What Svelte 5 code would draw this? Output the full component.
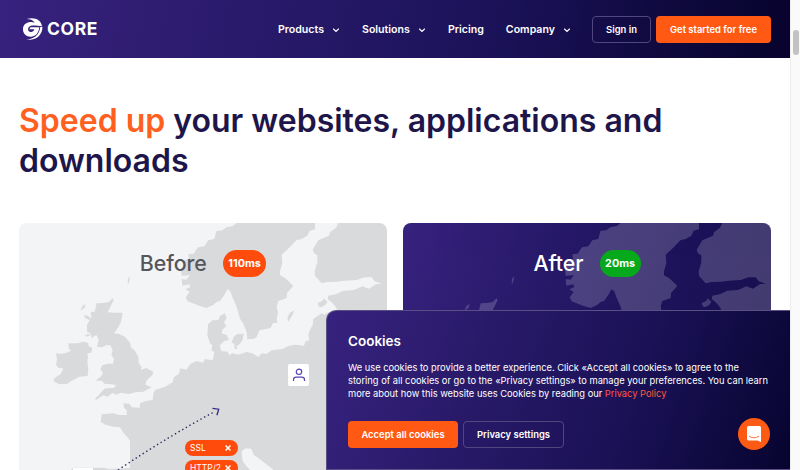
<script>
  const links = [
    { label: 'Products', menu: true },
    { label: 'Solutions', menu: true },
    { label: 'Pricing', menu: false },
    { label: 'Company', menu: true }
  ];
  const cards = [
    { title: 'Before', time: '110ms', kind: 'before' },
    { title: 'After', time: '20ms', kind: 'after' }
  ];
  const tags = ['SSL', 'HTTP/2'];
</script>

{#snippet europe()}
  <svg class="map" viewBox="0 0 1104 741" aria-hidden="true">
    <path d="M653 0L642 9 622 13 610 22 592 24 586 48 568 52 556 70 537 73 524 92 508 94 510 107 488 115 497 125 486 137 488 158 513 157 502 170 488 168 490 188 511 184 514 192 499 199 512 207 500 223 506 235 540 248 563 255 582 246 593 237 604 233 618 212 625 199 634 205 640 222 653 252 663 287 672 300 683 327 685 349 705 347 713 342 721 322 755 315 762 300 775 300 773 285 777 270 773 250 778 234 803 225 804 210 823 189 811 177 798 165 783 157 783 145 790 120 788 95 813 72 832 52 848 48 865 38 872 23 888 19 888 0Z" />
    <path d="M958 0L951 14 933 28 930 38 898 52 881 80 885 91 895 97 895 118 887 145 888 158 908 181 925 177 953 176 977 173 1013 171 1037 163 1058 163 1067 175 1088 182 1070 184 1050 197 1030 190 1005 201 973 203 950 214 928 218 926 228 938 238 948 249 956 262 923 269 918 275 907 271 883 288 881 306 873 320 868 335 871 352 860 354 855 368 828 365 808 369 790 378 758 382 743 393 728 391 718 402 700 391 683 387 658 395 640 391 631 397 626 386 606 384 603 367 615 354 630 351 623 336 608 331 610 320 622 310 615 298 623 285 617 271 603 279 598 291 580 292 567 304 565 337 573 361 580 367 577 382 586 387 583 405 580 412 558 408 552 419 533 414 515 422 502 440 483 436 481 451 465 463 461 478 438 491 408 501 403 511 401 531 380 534 363 541 362 554 338 553 332 543 313 541 315 554 323 562 323 576 300 576 283 571 248 574 245 597 260 605 283 611 303 613 312 628 328 646 333 655 333 735 270 738 255 734 163 734 155 741 693 741 680 727 670 712 668 685 680 676 697 677 704 695 723 709 742 724 764 741H1104V0Z" />
    <path d="M233 241L250 240 268 238 281 226 284 231 274 252 265 268 290 269 311 269 309 283 305 300 296 315 285 331 300 333 318 341 333 359 336 374 346 381 358 401 359 420 368 433 365 441 382 435 403 446 400 457 383 472 379 485 398 493 373 506 350 508 330 513 304 509 293 515 280 510 266 521 253 517 231 531 228 527 245 510 258 496 283 495 292 487 280 484 256 482 249 473 230 473 245 461 252 449 244 439 250 426 268 422 282 422 285 407 277 397 281 382 274 367 260 367 250 373 234 371 239 351 232 335 218 345 214 331 204 326 204 305 213 290 218 281 214 268 227 266Z" />
    <path d="M148 361L178 361 190 356 207 359 209 369 220 375 217 389 205 391 207 405 205 418 208 435 206 459 181 461 157 474 146 482 123 484 107 477 104 467 125 453 133 437 127 434 119 435 111 425 114 409 111 391 125 392 142 390 156 383 150 377Z" />
    <path d="M184 264L190 249 200 243 197 254ZM196 275L207 279 217 287 211 291 197 284ZM198 336L210 332 214 337 202 341ZM327 167L334 160 330 178 326 185Z" />
    <path d="M645 340L655 333 674 332 671 350 663 362 652 371 656 377 647 378 646 364 638 358ZM805 285L812 270 826 262 821 275 808 296ZM896 240L910 234 914 226 925 236 918 247 905 253 899 250Z" />
  </svg>
{/snippet}

<div class="page">
  <main>
    <header>
      <a class="logo" href="#home">
        <svg viewBox="0 0 66 72" width="22" height="24">
          <path fill="#fff" d="M38 17C22 12 4 18 3 35C2 50 14 60 28 59C42 58 50 48 52 31H25L22 37H37C35 44 28 47 23 44C16 41 17 30 25 27C32 24 48 27 60 27C56 8 38 0 14 6C24 6 33 9 38 17Z" />
          <path fill="#fff" d="M61 29C63 52 42 73 12 67C36 67 52 54 55 29Z" />
        </svg>
        <span>CORE</span>
      </a>
      <nav>
        {#each links as link}
          <a href="#{link.label}">{link.label}
            {#if link.menu}
              <svg width="8" height="5" viewBox="0 0 8 5"><path d="M1.500 1L4 3.500 6.500 1" fill="none" stroke="#fff" stroke-width="1.1" stroke-linecap="round" /></svg>
            {/if}
          </a>
        {/each}
      </nav>
      <button class="btn outline signin">Sign in</button>
      <button class="btn orange start">Get started for free</button>
    </header>

    <h1><em>Speed up</em> your websites, applications and downloads</h1>

    <section class="cards">
      {#each cards as card}
        <article class={card.kind}>
          {@render europe()}
          <div class="caption">
            <h2>{card.title}</h2>
            <span class="time">{card.time}</span>
          </div>
          {#if card.kind === 'before'}
            <svg class="route" viewBox="0 0 368 247" aria-hidden="true">
              <path d="M99 247Q150 213 196 188.500" fill="none" stroke="#30285c" stroke-width="1.400" stroke-dasharray="1.400 2.800" />
              <path d="M193.500 185.300l6.200.9-1.800 6" fill="none" stroke="#37278a" stroke-width="1.300" />
              <rect x="54" y="245" width="20" height="2" fill="#fff" />
            </svg>
            <div class="user">
              <svg width="14" height="14" viewBox="0 0 14 14" fill="none" stroke="#5a43b5" stroke-width="1.200"><circle cx="7" cy="3.800" r="2.700" /><path d="M1.500 13v-1.200c0-1.600 1.100-2.600 2.700-2.600h5.600c1.600 0 2.700 1 2.700 2.600V13" /></svg>
            </div>
            <ul class="tags">
              {#each tags as tag}
                <li>{tag}<svg width="6" height="6" viewBox="0 0 6 6"><path d="M.5.5l5 5M5.500.5l-5 5" stroke="#fff" stroke-width="1.500" /></svg></li>
              {/each}
            </ul>
          {/if}
        </article>
      {/each}
    </section>
  </main>

  <div class="scrollbar"><i></i></div>

  <aside class="cookies">
    <h3>Cookies</h3>
    <p>We use cookies to provide a better experience. Click «Accept all cookies» to agree to the<br />storing of all cookies or go to the «Privacy settings» to manage your preferences. You can learn<br />more about how this website uses Cookies by reading our <a href="#policy">Privacy Policy</a></p>
    <div class="actions">
      <button class="btn orange accept">Accept all cookies</button>
      <button class="btn outline settings">Privacy settings</button>
    </div>
  </aside>

  <button class="chat" aria-label="Open chat">
    <svg width="14" height="16" viewBox="0 0 14 16">
      <path fill="#fff" d="M1.500 0h11A1.500 1.500 0 0 1 14 1.500V16l-3.500-1.500h-9A1.500 1.500 0 0 1 0 13V1.500A1.500 1.500 0 0 1 1.500 0Z" />
      <path d="M2.300 10.300c2.600 2 6.800 2 9.400 0" fill="none" stroke="#ff5a13" stroke-width=".9" stroke-linecap="round" />
    </svg>
  </button>
</div>

<style>
  :global(body) { margin: 0; background: #fff; }
  .page {
    position: relative;
    display: flex;
    width: 800px;
    height: 470px;
    overflow: hidden;
    font-family: Inter, "Liberation Sans", sans-serif;
    color: #fff;
  }
  main { width: 790px; height: 470px; overflow: hidden; }
  header {
    box-sizing: border-box;
    display: flex;
    align-items: center;
    height: 58.4px;
    padding: 0 19px 0 22px;
    background: linear-gradient(100deg, #37227f 0%, #321f76 12%, #1b1259 62%, #08042f 97%);
  }
  a { color: inherit; text-decoration: none; }
  .logo { display: flex; align-items: center; width: 256px; }
  .logo svg { margin-top: -1px; }
  .logo span { margin: -1px 0 0 3px; font-size: 17.500px; font-weight: 700; line-height: 20px; letter-spacing: 0.6px; }
  nav { display: flex; width: 314px; gap: 22px; font-size: 10.600px; font-weight: 600; }
  nav a { display: flex; align-items: center; white-space: nowrap; }
  nav svg { margin: 2px 0 0 8px; }
  .btn {
    box-sizing: border-box;
    height: 27px;
    padding: 0;
    border: 0;
    border-radius: 4px;
    font: 600 9.450px/27px Inter, sans-serif;
    color: #fff;
    background: none;
    white-space: nowrap;
  }
  .outline { border: 1px solid #51477f; line-height: 25px; }
  .orange { background: #ff5913; }
  .signin { flex: none; width: 59px; }
  .start { flex: none; width: 115px; margin-left: 5px; }
  h1 {
    margin: 42.600px 19px 0;
    font-size: 32px;
    font-weight: 600;
    line-height: 40px;
    color: #1e164b;
  }
  h1 em { font-style: normal; color: #ff5f1f; }
  .cards { display: flex; gap: 16px; margin: 42px 19px 0; }
  article { position: relative; width: 368px; height: 260px; overflow: hidden; border-radius: 8px; }
  .before { background: #f3f4f6; }
  .after { background: linear-gradient(110deg, #37227f 0%, #271968 35%, #1c1259 65%, #150d4a 100%); }
  .map, .route { position: absolute; top: 0; left: 0; width: 368px; height: 247px; }
  .before .map { fill: #d9dadc; }
  .after .map { fill: #fff; opacity: 0.18; }
  .caption {
    position: relative;
    display: flex;
    align-items: center;
    justify-content: center;
    gap: 16px;
    margin-top: 27px;
    height: 27px;
  }
  h2 { margin: 0; font-size: 21.300px; font-weight: 500; line-height: 27px; }
  .before h2 { color: #55565d; }
  .time {
    padding: 0 5.500px;
    border-radius: 14px;
    font-size: 10.800px;
    font-weight: 700;
    line-height: 27px;
    background: #ff4b0c;
  }
  .after .time { background: #06a91b; }
  .user {
    position: absolute;
    top: 141px;
    left: 269px;
    display: flex;
    align-items: center;
    justify-content: center;
    width: 21px;
    height: 22px;
    border-radius: 2px;
    background: #fff;
  }
  .tags { position: absolute; top: 217px; left: 166px; margin: 0; padding: 0; list-style: none; }
  .tags li {
    box-sizing: border-box;
    display: flex;
    align-items: center;
    justify-content: space-between;
    width: 53px;
    height: 16px;
    margin-bottom: 4px;
    padding: 0 7px 0 5px;
    border-radius: 8px;
    font-size: 8.500px;
    background: #ff4b0c;
  }
  .scrollbar { box-sizing: border-box; width: 10px; padding: 30px 2px 0; border-left: 1px solid #ececec; background: #fafafa; }
  .scrollbar i { display: block; width: 6px; height: 25px; border-radius: 3px; background: #c2c2c2; }
  .cookies {
    position: absolute;
    box-sizing: border-box;
    left: 326px;
    top: 310px;
    width: 464px;
    height: 160px;
    padding: 21px 21px 0;
    border: 1px solid #5a5085;
    border-right: 0;
    border-radius: 10px 0 0 0;
    background: linear-gradient(110deg, #37227f 0%, #291a69 32%, #1a1156 65%, #07042f 100%);
  }
  h3 { margin: 0; font-size: 13.500px; font-weight: 600; line-height: 18px; }
  p { margin: 10.600px 0 0; font-size: 9.310px; line-height: 13.400px; white-space: nowrap; }
  p a { color: #ff5837; }
  .actions { display: flex; gap: 5px; margin-top: 20.400px; }
  .accept { width: 110px; }
  .settings { width: 101px; }
  .chat {
    position: absolute;
    left: 738px;
    top: 418px;
    display: flex;
    align-items: center;
    justify-content: center;
    width: 32px;
    height: 32px;
    padding: 0;
    border: 0;
    border-radius: 50%;
    background: #ff5a13;
  }
</style>
